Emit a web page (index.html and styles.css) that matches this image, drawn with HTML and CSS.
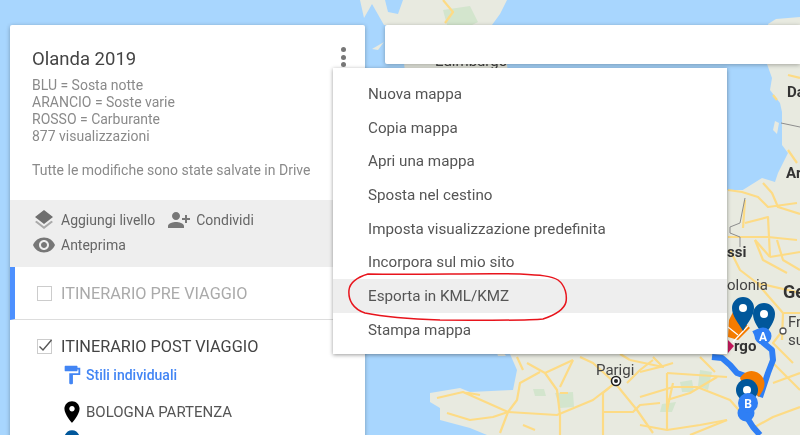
FILE: index.html
```html
<!DOCTYPE html>
<html lang="it">
<head>
<meta charset="utf-8">
<title>Olanda 2019</title>
<link rel="stylesheet" href="styles.css">
</head>
<body>
<div class="stage">
  <svg class="map" width="800" height="435" viewBox="0 0 800 435">
    <rect width="800" height="435" fill="#a8d6fe"/>
    <g fill="#e8eae0">
      <path d="M360 0H385L388 12 398 14 403 0H507L500 14 492 25 505 50 508 72H405L400 25 384 25 372 4 364 18Z"/>
      <path d="M372 49 384 42 378 50Z"/>
      <path d="M768 24 776 19 800 17V30H770Z"/>
      <path d="M767 64H800V195H725V190L738 193 762 178 775 182 778 173 788 153 782 145 782 112 780 103 770 90 772 78Z"/>
      <path d="M775 121 779 123 777 134 773 130Z"/>
      <path d="M725 190H800V435H487L470 428 440 420 440 408 430 402 430 393 460 388 470 392 513 390 517 370 510 354H725Z"/>
      <path d="M497 353 503 352 506 356 498 356Z"/>
    </g>
    <g fill="#d3e5cd">
      <path d="M443 10 470 6 478 22 472 25H447Z"/>
      <path d="M533 389 544 389 546 396 535 396Z"/>
      <path d="M555 393 573 392 574 407 560 408Z"/>
      <path d="M680 382 692 380 694 392 682 392Z"/>
      <path d="M700 370 712 372 708 390 698 386Z"/>
      <path d="M662 404 676 402 672 412 660 412Z"/>
    </g>
    <g fill="none" stroke="#fddb85" stroke-width="2.2" stroke-linejoin="round">
      <path d="M443 0 453 12 445 23"/>
      <path d="M517 357 523 370M527 363 545 373 573 360M540 372 520 383 517 400 508 412"/>
      <path d="M437 398 463 392 508 412M447 413 470 420 493 417 508 412M463 392 480 395"/>
      <path d="M508 412 557 415 593 400 615 383"/>
      <path d="M545 373 557 390 560 415 560 435M560 393 568 393M573 360 560 387"/>
      <path d="M615 383 593 363 580 357M615 383 603 393 603 435M603 412 633 412 640 405 660 403"/>
      <path d="M615 383 637 410 653 433M627 383 640 370 653 360"/>
      <path d="M508 412 500 433M523 425 535 430"/>
      <path d="M630 360 663 367 653 357M667 373 667 400 690 393 717 377M667 373 727 377M667 400 667 430"/>
      <path d="M640 372 660 367 673 363M673 383 667 410M640 397 673 387 697 387 730 400 750 423"/>
      <path d="M773 363 800 390M773 383 800 373M753 428 773 417 800 407M727 420 690 435M700 357 715 372"/>
      <path d="M640 425 667 430 700 425 727 420M620 354 630 360"/>
      <path d="M730 250 740 270 757 283 783 313 782 340M777 240 783 260 800 270M755 240 763 260 787 273M757 283 800 293M783 313 800 313M783 330 773 343 793 363"/>
      <path d="M728 190 742 192 758 197 768 207 797 203M763 183 772 193 778 207 800 214"/>
      <path d="M745 223 768 217 770 257M728 237 768 237 797 240M745 200 743 228"/>
      <path d="M770 257 800 252M770 257 755 240M788 75 800 78M788 150 797 163M773 95 777 100"/>
    </g>
    <path d="M745 198 740 223 730 227 730 233 740 237 740 247" fill="none" stroke="#8d8d8d" stroke-width="1"/>
    <path d="M781 123 800 127" fill="none" stroke="#8d8d8d" stroke-width="1"/>
    <circle cx="616" cy="381" r="4.5" fill="#fff" stroke="#222" stroke-width="1.6"/>
    <circle cx="616" cy="381" r="2" fill="#222"/>
    <circle cx="783" cy="331" r="3" fill="#fff" stroke="#555" stroke-width="1.3"/>
    <text class="map-label" x="435" y="66">Edimburgo</text>
    <text class="map-label" x="596" y="375">Parigi</text>
    <text class="map-label map-label-bold" x="787" y="97">Da</text>
    <text class="map-label map-label-bold" x="786" y="178">Ar</text>
    <text class="map-label map-label-bold" x="727" y="257">ssi</text>
    <text class="map-label" x="727" y="290">olonia</text>
    <text class="map-label map-label-big" x="783" y="298">Ge</text>
    <text class="map-label" x="788" y="327">Fr</text>
    <text class="map-label" x="788" y="345">su</text>
    <text class="map-label map-label-bold" x="734" y="351">rgo</text>
    <path d="M712 357 722 358 730 365 737 373 748 377M755 330 760 340 772 350 773 360 768 373 760 397M748 404 746 416 753 427 760 435" fill="none" stroke="#2f7ff5" stroke-width="6" stroke-linejoin="round"/>
    <path d="M729 320 733 312 750 328 738 340 728 337Z" fill="#f57c00"/>
    <path d="M728 327 738 335M733 342 748 326" fill="none" stroke="#fff" stroke-width="1.2"/>
    <path d="M728 340 734 346 728 353Z" fill="#c2185b"/>
    <path d="M743 331C738 322 732 316 732 308A11 11 0 0 1 754 308C754 316 748 322 743 331Z" fill="#01579b"/>
    <circle cx="743" cy="308" r="4" fill="#fff"/>
    <path d="M764 337C759 328 753 322 753 314A11 11 0 0 1 775 314C775 322 769 328 764 337Z" fill="#01579b"/>
    <circle cx="764" cy="314" r="4" fill="#fff"/>
    <circle cx="763" cy="336" r="8.5" fill="#2f7ff5"/>
    <text class="route-label" x="763" y="341">A</text>
    <path d="M759 397 763 390A12.500 12.500 0 0 0 740 378C742 386 752 390 759 397Z" fill="#f57c00"/>
    <circle cx="747" cy="390" r="11" fill="#01579b"/>
    <circle cx="747" cy="390" r="4" fill="#fff"/>
    <circle cx="746" cy="413" r="8.5" fill="#2f7ff5"/>
    <circle cx="748" cy="403" r="10" fill="#2f7ff5"/>
    <text class="route-label" x="748" y="408">B</text>
  </svg>

  <aside class="panel">
    <div class="head">
      <div class="head-top">
        <h1 class="title">Olanda 2019</h1>
        <div class="kebab"><i></i><i></i><i></i></div>
      </div>
      <p class="desc">BLU = Sosta notte<br>ARANCIO = Soste varie<br>ROSSO = Carburante<br>877 visualizzazioni</p>
      <p class="saved">Tutte le modifiche sono state salvate in Drive</p>
    </div>
    <div class="tools">
      <div class="tool">
        <svg class="ti" width="24" height="24" viewBox="0 0 24 24"><path fill="#a9a9a9" d="M11.99 18.54l-7.37-5.73L3 14.07l9 7 9-7-1.63-1.27-7.38 5.74z"/><path fill="#6f6f6f" d="M12 16l7.36-5.73L21 9l-9-7-9 7 1.63 1.27L12 16z"/></svg>
        <span>Aggiungi livello</span>
      </div>
      <div class="tool">
        <svg class="ti flip" width="24" height="24" viewBox="0 0 24 24"><path fill="#777" d="M15 12c2.21 0 4-1.790 4-4s-1.790-4-4-4-4 1.790-4 4 1.790 4 4 4zm-9-2V7H4v3H1v2h3v3h2v-3h3v-2H6zm9 4c-2.670 0-8 1.340-8 4v2h16v-2c0-2.660-5.330-4-8-4z"/></svg>
        <span>Condividi</span>
      </div>
      <div class="tool tool-full">
        <svg class="ti" width="24" height="24" viewBox="0 0 24 24"><path fill="#777" d="M12 4.5C7 4.5 2.73 7.61 1 12c1.73 4.39 6 7.5 11 7.5s9.27-3.11 11-7.5c-1.73-4.39-6-7.5-11-7.5zM12 17c-2.76 0-5-2.24-5-5s2.24-5 5-5 5 2.24 5 5-2.24 5-5 5zm0-8c-1.66 0-3 1.34-3 3s1.34 3 3 3 3-1.34 3-3-1.34-3-3-3z"/></svg>
        <span>Anteprima</span>
      </div>
    </div>
    <div class="layer layer-active">
      <span class="box"></span>
      <span class="layer-name layer-name-off">ITINERARIO PRE VIAGGIO</span>
    </div>
    <div class="layer layer-open">
      <span class="box"><svg width="16" height="16" viewBox="0 0 16 16"><path d="M2.5 8.500 6 12 14.500 2" fill="none" stroke="#555" stroke-width="1.4"/></svg></span>
      <span class="layer-name">ITINERARIO POST VIAGGIO</span>
    </div>
    <div class="sub sub-style">
      <svg width="22" height="22" viewBox="0 0 24 24"><path fill="#4285f4" d="M18 4V3c0-.55-.45-1-1-1H5c-.55 0-1 .45-1 1v4c0 .55.45 1 1 1h12c.55 0 1-.45 1-1V6h1v4H9v11c0 .55.45 1 1 1h2c.55 0 1-.45 1-1v-9h8V4h-3z"/></svg>
      <span class="style-link">Stili individuali</span>
    </div>
    <div class="sub sub-place">
      <svg width="26" height="26" viewBox="0 0 24 24"><path fill="#000" d="M12 2C8.13 2 5 5.13 5 9c0 5.25 7 13 7 13s7-7.750 7-13c0-3.870-3.130-7-7-7zm0 9.500c-1.380 0-2.500-1.120-2.500-2.500s1.120-2.500 2.500-2.500 2.500 1.120 2.500 2.500-1.120 2.500-2.500 2.500z"/></svg>
      <span class="place-name">BOLOGNA PARTENZA</span>
    </div>
    <div class="sub sub-place sub-next">
      <svg width="26" height="26" viewBox="0 0 24 24"><path fill="#01579b" d="M12 2C8.13 2 5 5.13 5 9c0 5.25 7 13 7 13s7-7.750 7-13c0-3.870-3.130-7-7-7zm0 9.500c-1.380 0-2.500-1.120-2.500-2.500s1.120-2.500 2.500-2.500 2.500 1.120 2.500 2.500-1.120 2.500-2.500 2.500z"/></svg>
    </div>
  </aside>

  <div class="search"></div>

  <ul class="menu">
    <li>Nuova mappa</li>
    <li>Copia mappa</li>
    <li>Apri una mappa</li>
    <li>Sposta nel cestino</li>
    <li>Imposta visualizzazione predefinita</li>
    <li>Incorpora sul mio sito</li>
    <li class="menu-hover">Esporta in KML/KMZ</li>
    <li>Stampa mappa</li>
  </ul>

  <svg class="scribble" width="800" height="435" viewBox="0 0 800 435">
    <path d="M368 274C420 275 480 273 520 274 540 275 552 276 558 280 566 286 567 296 566 302 564 310 555 315 543 319 525 321 480 320 440 320 410 319 385 317 365 313 353 309 348 300 349 290 350 282 358 277 368 274Z" fill="none" stroke="#e8141c" stroke-width="1.5"/>
  </svg>
</div>
</body>
</html>
```

FILE: styles.css
```css
* { box-sizing: border-box; }
html, body { margin: 0; height: 100%; }
body { font-family: Roboto, "Liberation Sans", sans-serif; overflow: hidden; }

.stage {
  position: relative;
  width: 800px;
  height: 435px;
  overflow: hidden;
  display: flex;
  align-items: flex-start;
  gap: 20px;
  padding: 25px 0 0 10px;
  filter: blur(.35px);
}

.map { position: absolute; left: 0; top: 0; }
.map-label { font-size: 15px; fill: #444; }
.map-label-bold { font-weight: 700; fill: #333; }
.map-label-big { font-size: 18px; font-weight: 700; fill: #333; }
.route-label { font-size: 12px; font-weight: 700; fill: #fff; text-anchor: middle; }

.panel {
  position: relative;
  flex: none;
  width: 355px;
  height: 430px;
  background: #fff;
  border-radius: 2px;
  box-shadow: 0 1px 4px rgba(0, 0, 0, .3);
}

.head { height: 175px; padding: 22px 19px 0 22px; }
.head-top { display: flex; justify-content: space-between; align-items: flex-start; }
.title { margin: 0; font-size: 18.500px; line-height: 24px; font-weight: 400; color: #444; }
.kebab { display: flex; flex-direction: column; gap: 2px; }
.kebab i { width: 5px; height: 5px; border-radius: 50%; background: #777; display: block; margin-bottom: 0.500px; }
.desc { margin: 6px 0 0; font-size: 14px; line-height: 17px; color: #8a8a8a; }
.saved { margin: 17px 0 0; font-size: 14px; line-height: 17px; color: #8a8a8a; }

.tools {
  height: 67px;
  background: #eee;
  padding: 8px 0 0 22px;
  display: flex;
  flex-wrap: wrap;
  align-content: flex-start;
  column-gap: 12px;
  row-gap: 1px;
}
.tool { display: flex; align-items: center; height: 24px; font-size: 14px; color: #666; gap: 5px; }
.tool-full { width: 100%; }
.ti { flex: none; }
.flip { transform: scaleX(-1); }

.layer { display: flex; align-items: center; }
.layer-active { height: 53px; border-left: 5px solid #4d90fe; border-bottom: 1px solid #ddd; padding-left: 22px; }
.layer-open { height: 53px; padding: 0 0 1px 27px; }
.box {
  width: 15px;
  height: 15px;
  border: 1px solid #ccc;
  flex: none;
  margin-right: 9px;
  display: flex;
  align-items: center;
  justify-content: center;
}
.box svg { flex: none; }
.layer-name { font-size: 16.300px; color: #444; }
.layer-name-off { color: #aaa; }

.sub { display: flex; align-items: center; }
.sub-style { height: 22px; padding-left: 51px; gap: 3px; margin-top: -9px; }
.style-link { font-size: 14px; font-weight: 500; color: #4285f4; }
.sub-place { height: 26px; padding-left: 49px; margin-top: 13px; gap: 1px; }
.sub-next { margin-top: 3px; }
.place-name { font-size: 15px; color: #555; }

.search { flex: 1; height: 39px; background: #fff; box-shadow: 0 1px 4px rgba(0, 0, 0, .3); border-radius: 2px 0 0 2px; position: relative; }

.menu {
  position: absolute;
  left: 333px;
  top: 68px;
  width: 394px;
  height: 286px;
  margin: 0;
  padding: 9px 0 0;
  list-style: none;
  background: #fff;
  box-shadow: 0 1px 4px rgba(0, 0, 0, .4);
}
.menu li { height: 33.700px; line-height: 35.700px; padding-left: 35px; font-size: 15.200px; color: #555; }
.menu .menu-hover { background: #eee; }

.scribble { position: absolute; left: 0; top: 0; pointer-events: none; }
```
